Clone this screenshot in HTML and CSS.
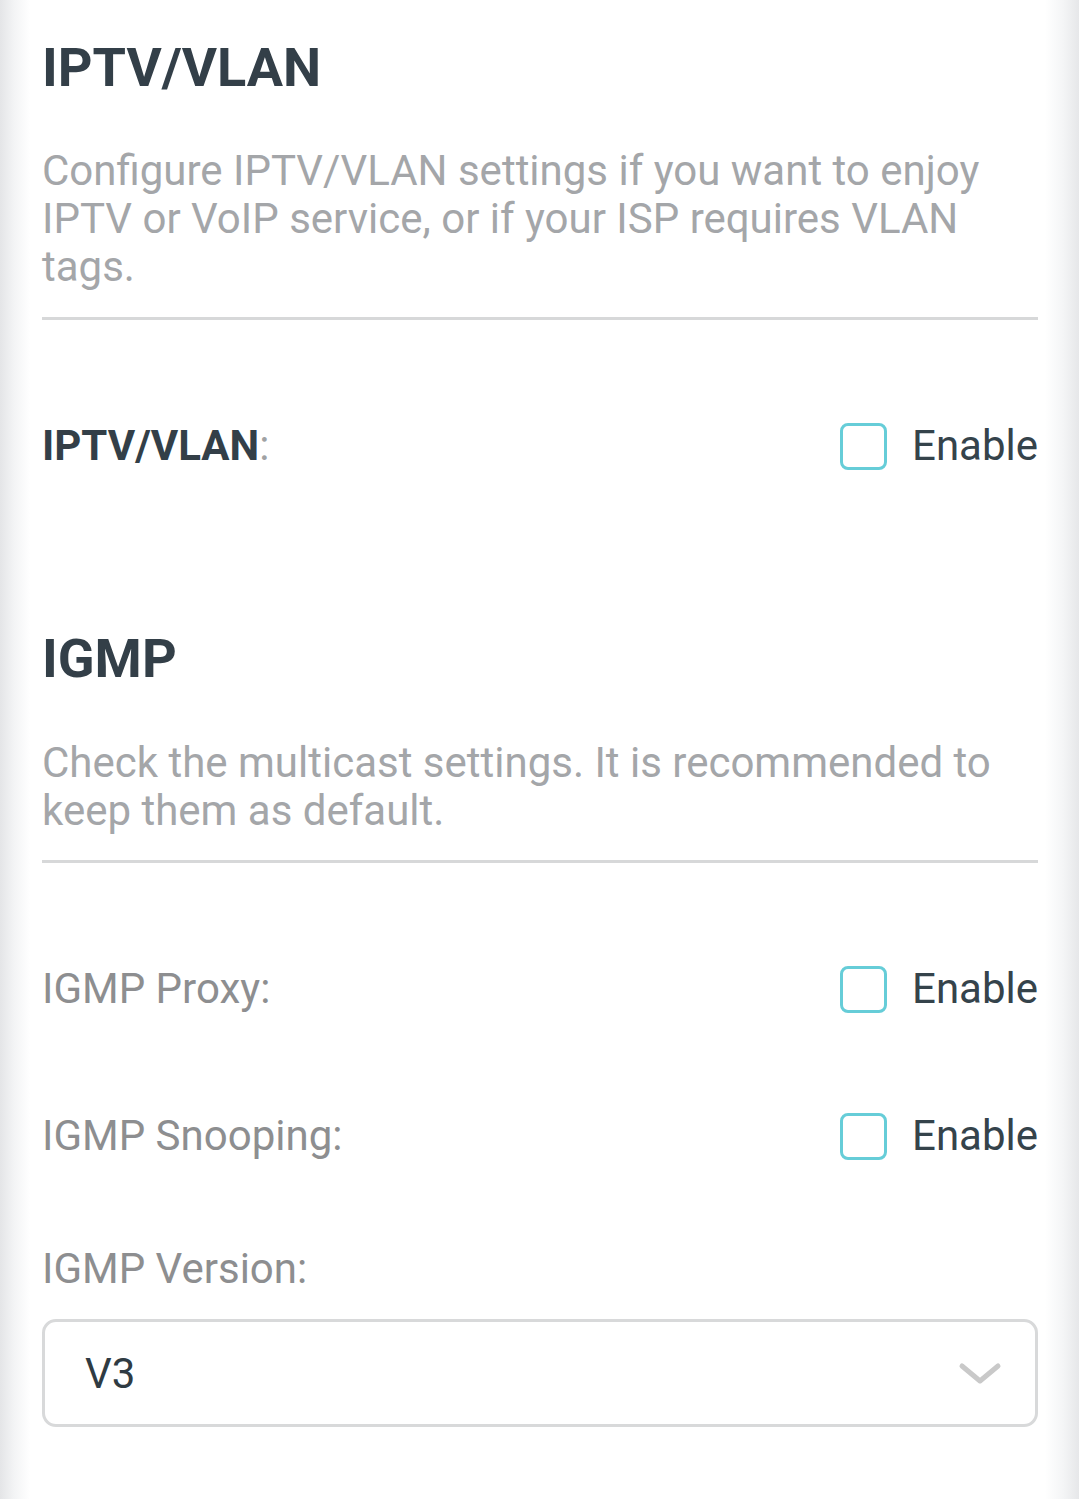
FILE: index.html
```html
<!DOCTYPE html>
<html lang="en">
<head>
<meta charset="utf-8">
<title>IPTV/VLAN</title>
<link rel="stylesheet" href="styles.css">
</head>
<body>
<main class="page">
  <section class="section section-iptv">
    <h1 class="title">IPTV/VLAN</h1>
    <p class="desc">Configure IPTV/VLAN settings if you want to enjoy IPTV or VoIP service, or if your ISP requires VLAN tags.</p>
    <hr class="divider">
    <div class="row row-first">
      <span class="label label-strong">IPTV/VLAN<span class="colon">:</span></span>
      <label class="check"><span class="box"></span><span class="check-text">Enable</span></label>
    </div>
  </section>

  <section class="section section-igmp">
    <h1 class="title">IGMP</h1>
    <p class="desc">Check the multicast settings. It is recommended to keep them as default.</p>
    <hr class="divider">
    <div class="row row-first">
      <span class="label">IGMP Proxy:</span>
      <label class="check"><span class="box"></span><span class="check-text">Enable</span></label>
    </div>
    <div class="row row-next">
      <span class="label">IGMP Snooping:</span>
      <label class="check"><span class="box"></span><span class="check-text">Enable</span></label>
    </div>
    <div class="field">
      <span class="label field-label">IGMP Version:</span>
      <div class="select">
        <span class="select-value">V3</span>
        <svg class="chevron" width="44" height="26" viewBox="0 0 44 26" aria-hidden="true">
          <path d="M4 5 L22 20 L40 5" fill="none" stroke="#c9c9c9" stroke-width="5" stroke-linecap="round" stroke-linejoin="round"/>
        </svg>
      </div>
    </div>
  </section>
</main>
</body>
</html>
```

FILE: styles.css
```css
html, body {
  margin: 0;
  padding: 0;
}

body {
  font-family: Roboto, "Noto Sans", "Liberation Sans", sans-serif;
  background:
    linear-gradient(to right, #e4e5e7 0px, #f3f4f5 14px, #ffffff 30px, #ffffff calc(100% - 34px), #f4f5f6 calc(100% - 16px), #e6e7e9 100%);
  min-height: 1499px;
  color: #333f48;
}

.page {
  padding: 36px 41px 0 42px;
  box-sizing: border-box;
  width: 1079px;
}

.title {
  margin: 0;
  font-size: 54px;
  line-height: 64px;
  font-weight: 700;
  color: #333f48;
}

.desc {
  margin: 47px 0 0;
  font-size: 42px;
  line-height: 48px;
  color: #a4a6a9;
}

.divider {
  margin: 26px 0 0;
  border: 0;
  height: 3px;
  background: #d7d8d9;
}

.row {
  display: flex;
  align-items: center;
  justify-content: space-between;
  height: 48px;
}

.row-first {
  margin-top: 102px;
}

.row-next {
  margin-top: 99px;
}

.label {
  font-size: 42px;
  line-height: 48px;
  color: #8d8e90;
}

.label-strong {
  font-weight: 700;
  color: #333f48;
}

.colon {
  font-weight: 400;
  color: #a0a2a4;
}

.check {
  display: flex;
  align-items: center;
  gap: 25px;
}

.box {
  width: 47px;
  height: 47px;
  box-sizing: border-box;
  border: 3px solid #66cdd8;
  border-radius: 8px;
  background: #fff;
}

.check-text {
  font-size: 42px;
  line-height: 48px;
  color: #35434b;
}

.section-igmp {
  margin-top: 157px;
}

.section-igmp .desc {
  margin-top: 48px;
}

.section-igmp .divider {
  margin-top: 25px;
}

.field {
  margin-top: 84px;
}

.field-label {
  display: block;
  line-height: 50px;
}

.select {
  margin-top: 25px;
  height: 108px;
  box-sizing: border-box;
  border: 3px solid #d8d9da;
  border-radius: 14px;
  display: flex;
  align-items: center;
  justify-content: space-between;
  padding: 0 33px 0 40px;
}

.select-value {
  font-size: 42px;
  color: #2f3b43;
}

.chevron {
  display: block;
  margin-top: 2px;
}
```
